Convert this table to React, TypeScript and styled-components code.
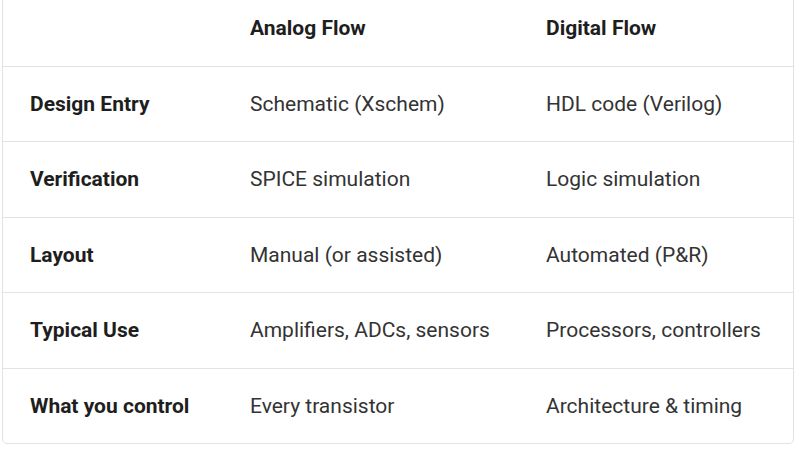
import React from 'react';
import styled, { createGlobalStyle } from 'styled-components';

type FlowRow = {
  label: string;
  analog: string;
  digital: string;
};

const rows: FlowRow[] = [
  { label: 'Design Entry', analog: 'Schematic (Xschem)', digital: 'HDL code (Verilog)' },
  { label: 'Verification', analog: 'SPICE simulation', digital: 'Logic simulation' },
  { label: 'Layout', analog: 'Manual (or assisted)', digital: 'Automated (P&R)' },
  { label: 'Typical Use', analog: 'Amplifiers, ADCs, sensors', digital: 'Processors, controllers' },
  { label: 'What you control', analog: 'Every transistor', digital: 'Architecture & timing' },
];

const GlobalStyle = createGlobalStyle`
  html, body {
    margin: 0;
    padding: 0;
    background: #ffffff;
  }
  body {
    font-family: Roboto, "Liberation Sans", Arial, sans-serif;
    overflow: hidden;
  }
`;

const TableWrapper = styled.div`
  margin: -10px 0 0 2px;
  width: 792px;
  border: 1px solid #e2e2e2;
  border-radius: 5px;
  overflow: hidden;
  box-sizing: border-box;
`;

const Table = styled.table`
  width: 100%;
  border-collapse: collapse;
  table-layout: fixed;
  font-size: 21px;
  line-height: 26.5px;
  color: #2f2f2f;
`;

const Col = styled.col<{ $width?: number }>`
  width: ${(p) => (p.$width ? `${p.$width}px` : 'auto')};
`;

const Row = styled.tr`
  border-bottom: 1px solid #e2e2e2;
  tbody &:last-child {
    border-bottom: none;
  }
`;

const Cell = styled.td<{ $strong?: boolean }>`
  padding: 24px 0 24px 27px;
  text-align: left;
  vertical-align: middle;
  white-space: nowrap;
  font-weight: ${(p) => (p.$strong ? 700 : 400)};
  color: ${(p) => (p.$strong ? '#1e1e1e' : '#333333')};
`;

const HeadCell = styled(Cell).attrs({ as: 'th' })``;

export default function App() {
  return (
    <>
      <GlobalStyle />
      <TableWrapper>
        <Table>
          <colgroup>
            <Col $width={220} />
            <Col $width={296} />
            <Col />
          </colgroup>
          <thead>
            <Row>
              <HeadCell $strong />
              <HeadCell $strong>Analog Flow</HeadCell>
              <HeadCell $strong>Digital Flow</HeadCell>
            </Row>
          </thead>
          <tbody>
            {rows.map((row) => (
              <Row key={row.label}>
                <Cell $strong>{row.label}</Cell>
                <Cell>{row.analog}</Cell>
                <Cell>{row.digital}</Cell>
              </Row>
            ))}
          </tbody>
        </Table>
      </TableWrapper>
    </>
  );
}
